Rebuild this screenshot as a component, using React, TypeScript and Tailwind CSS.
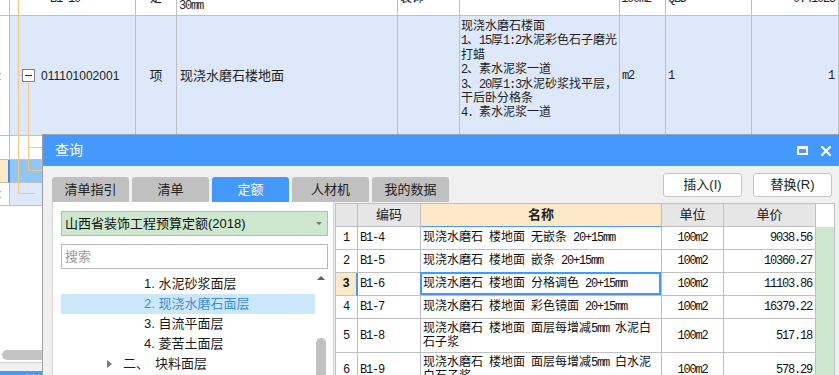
import React from 'react';

const SANS = "font-['Liberation_Sans','Noto_Sans_CJK_SC',sans-serif]";
const MONO = "font-['Liberation_Mono','Noto_Sans_CJK_SC',monospace]";

// SimSun-like: half-width latin, full-width CJK
const Mixed = ({ text }: { text: string }) => {
  const parts = text.split(/([\x20-\x7e]+)/).filter(Boolean);
  return (
    <>
      {parts.map((p, i) =>
        /^[\x20-\x7e]+$/.test(p) ? (
          <span key={i} className="tracking-[-1.2px]">{p}</span>
        ) : (
          <span key={i}>{p}</span>
        )
      )}
    </>
  );
};

const cell = 'shrink-0 border-r border-b border-[#c0c0c0] h-full';

const descLines = [
  '现浇水磨石楼面',
  '1、15厚1:2水泥彩色石子磨光',
  '打蜡',
  '2、素水泥浆一道',
  '3、20厚1:3水泥砂浆找平层，',
  '干后卧分格条',
  '4. 素水泥浆一道',
];

const tabs = ['清单指引', '清单', '定额', '人材机', '我的数据'];

const treeItems = ['1. 水泥砂浆面层', '2. 现浇水磨石面层', '3. 自流平面层', '4. 菱苦土面层'];

const rows = [
  { no: '1', code: 'B1-4', name: ['现浇水磨石 楼地面 无嵌条 20+15mm'], unit: '100m2', price: '9038.56' },
  { no: '2', code: 'B1-5', name: ['现浇水磨石 楼地面 嵌条 20+15mm'], unit: '100m2', price: '10360.27' },
  { no: '3', code: 'B1-6', name: ['现浇水磨石 楼地面 分格调色 20+15mm'], unit: '100m2', price: '11103.86', sel: true },
  { no: '4', code: 'B1-7', name: ['现浇水磨石 楼地面 彩色镜面 20+15mm'], unit: '100m2', price: '16379.22' },
  { no: '5', code: 'B1-8', name: ['现浇水磨石 楼地面 面层每增减5mm 水泥白', '石子浆'], unit: '100m2', price: '517.18', tall: true },
  { no: '6', code: 'B1-9', name: ['现浇水磨石 楼地面 面层每增减5mm 白水泥', '白石子浆'], unit: '100m2', price: '578.29', tall: true },
];

const BackgroundTable = () => (
  <div className="flex flex-col">
    {/* partially scrolled-off row */}
    <div className={`flex h-[34px] -mt-[18px] bg-white text-[12px] text-[#222] ${MONO}`}>
      <div className={`${cell} w-[10px]`} />
      <div className={`${cell} w-[126px] flex items-center pl-[40px]`}><Mixed text="B1-10" /></div>
      <div className={`${cell} w-[41px] flex items-center justify-center`}>定</div>
      <div className={`${cell} w-[221px] flex flex-col justify-center pl-[2px] leading-[14px] whitespace-pre`}>
        <div><Mixed text="现浇水磨石 楼地面 面层每增减5mm 嵌条" /></div>
        <div><Mixed text="30mm" /></div>
      </div>
      <div className={`${cell} w-[62px] flex items-center pl-[2px]`}>装饰</div>
      <div className={`${cell} w-[160px]`} />
      <div className={`${cell} w-[46px] flex items-center pl-[1px]`}><Mixed text="100m2" /></div>
      <div className={`${cell} w-[86px] flex items-center pl-[2px]`}><Mixed text="QBD" /></div>
      <div className={`${cell} flex-1 flex items-center justify-end pr-[3px]`}><Mixed text="0.41025" /></div>
    </div>

    {/* current bill item */}
    <div className="flex h-[120px] bg-[#dde9fb] text-[12px] text-[#222]">
      <div className={`${cell} w-[10px] bg-white flex items-center ${SANS} overflow-hidden`}>
        <span className="-ml-[2px]">:</span>
      </div>
      <div className={`${cell} w-[126px] flex items-center pl-[12px] gap-[6px] ${SANS}`}>
        <div className="w-[13px] h-[13px] border border-[#808080] bg-white flex items-center justify-center">
          <div className="w-[7px] h-px bg-[#333]" />
        </div>
        <span className="text-[12px]">011101002001</span>
      </div>
      <div className={`${cell} w-[41px] flex items-center justify-center ${SANS} text-[13px]`}>项</div>
      <div className={`${cell} w-[221px] flex items-center pl-[3px] ${SANS} text-[13px]`}>现浇水磨石楼地面</div>
      <div className={`${cell} w-[62px]`} />
      <div className={`${cell} w-[160px] pt-[4px] pl-[1px] leading-[14.4px] whitespace-pre ${MONO}`}>
        {descLines.map((l) => (
          <div key={l}><Mixed text={l} /></div>
        ))}
      </div>
      <div className={`${cell} w-[46px] flex items-center pl-[2px] ${MONO}`}><Mixed text="m2" /></div>
      <div className={`${cell} w-[86px] flex items-center pl-[2px] ${MONO}`}><Mixed text="1" /></div>
      <div className={`${cell} flex-1 flex items-center justify-end pr-[4px] ${MONO}`}><Mixed text="1" /></div>
    </div>

    <div className="flex h-[24px] bg-white">
      <div className={`${cell} w-[10px]`} />
      <div className={`${cell} flex-1`} />
    </div>
    <div className="flex h-[23px] bg-[#90c7f7]">
      <div className={`${cell} w-[10px] bg-[#fde8c8] border-r-[2px] border-r-[#3d8ef0]`} />
      <div className={`${cell} flex-1`} />
    </div>
    <div className={`flex h-[23px] bg-[#dde9fb] text-[12px] ${SANS}`}>
      <div className={`${cell} w-[10px] bg-white flex items-center overflow-hidden`}>
        <span className="-ml-[2px]">:</span>
      </div>
      <div className={`${cell} flex-1`} />
    </div>

    <div className="h-[142px] bg-white" />
    <div className="h-[14px] bg-white flex items-center pl-[2px]">
      <div className="w-[60px] h-[10px] rounded-full bg-[#c4c4c4]" />
    </div>
    <div className="h-px bg-[#cfcfcf]" />
    <div className="h-[8px] bg-[#f0f0f0]" />
    <div className={`h-[20px] bg-[#4499ff] pl-[12px] text-[12px] text-white leading-[16px] pt-[2px] ${SANS}`}>工料机显示</div>
  </div>
);

const TreeLines = () => (
  <svg className="absolute left-0 top-0" width="60" height="210" viewBox="0 0 60 210">
    <g stroke="#f8c67a" strokeWidth="1" fill="none">
      <path d="M18.5 0 V193.5 H35" />
      <path d="M18.5 75.5 H22" />
      <path d="M28.5 83 V170.5 H43" />
      <path d="M28.5 147.5 H43" />
    </g>
  </svg>
);

const QueryDialog = () => (
  <div className={`absolute left-[42px] top-[134px] w-[801px] h-[260px] border border-[#a0a0a0] bg-[#f0f0f0] flex flex-col ${SANS}`}>
    {/* title bar */}
    <div className="h-[31px] shrink-0 bg-[#4499ff] flex items-center justify-between pl-[12px] pr-[11px]">
      <span className="text-[14px] text-white">查询</span>
      <div className="flex items-center gap-[13px]">
        <div className="w-[11px] h-[9px] border-2 border-t-[3px] border-white" />
        <svg width="10" height="10" viewBox="0 0 10 10">
          <path d="M1 1 L9 9 M9 1 L1 9" stroke="white" strokeWidth="2.2" strokeLinecap="square" />
        </svg>
      </div>
    </div>

    {/* tabs + actions */}
    <div className="mt-[7px] flex items-end justify-between pl-[9px] pr-[10px]">
      <div className="flex gap-[3px]">
        {tabs.map((t) => (
          <div
            key={t}
            className={`w-[77px] h-[25px] rounded-t-[3px] flex items-center justify-center text-[13px] ${
              t === '定额' ? 'bg-[#4499ff] text-white' : 'bg-[#c0c0c0] text-[#222]'
            }`}
          >
            {t}
          </div>
        ))}
      </div>
      <div className="flex gap-[11px] mb-[5px]">
        <button className="w-[79px] h-[24px] bg-white border border-[#c6c6c6] rounded-[3px] text-[13px] text-[#222]">插入(I)</button>
        <button className="w-[79px] h-[24px] bg-white border border-[#c6c6c6] rounded-[3px] text-[13px] text-[#222]">替换(R)</button>
      </div>
    </div>

    {/* content */}
    <div className="flex flex-1 pl-[9px] min-h-0">
      {/* quota tree */}
      <div className="w-[282px] h-full bg-white border-x border-[#d4d4d4] pt-[9px] pl-[8px] flex flex-col">
        <div className="w-[267px] h-[25px] shrink-0 bg-[#cde8cf] border border-[#b8b8b8] flex items-center justify-between pl-[3px] pr-[5px]">
          <span className="text-[13px] text-[#111]">山西省装饰工程预算定额(2018)</span>
          <div className="w-0 h-0 border-x-[3px] border-x-transparent border-t-[3px] border-t-[#777]" />
        </div>
        <div className="w-[267px] h-[25px] shrink-0 mt-[8px] bg-white border border-[#b8b8b8] flex items-center pl-[3px]">
          <span className="text-[13px] text-[#9a9a9a]">搜索</span>
        </div>
        <div className="flex mt-[4px] flex-1 min-h-0">
          <div className="w-[254px] pt-[1px]">
            {treeItems.map((t, i) => (
              <div
                key={t}
                className={`h-[20px] flex items-center pl-[83px] text-[13px] ${
                  i === 1 ? 'bg-[#cce6fa] text-[#3a8ee6]' : 'text-[#1a1a1a]'
                }`}
              >
                {t}
              </div>
            ))}
            <div className="h-[20px] flex items-center pl-[46px] text-[13px] text-[#1a1a1a]">
              <div className="w-0 h-0 border-y-[4px] border-y-transparent border-l-[5px] border-l-[#7a7a7a]" />
              <span className="ml-[11px]">二、</span>
              <span className="ml-[6px]">块料面层</span>
            </div>
          </div>
          <div className="w-[12px] flex flex-col items-center pt-[3px]">
            <div className="w-0 h-0 border-x-[4px] border-x-transparent border-b-[4px] border-b-[#606060]" />
            <div className="mt-[58px] w-[10px] h-[60px] rounded-full bg-[#c1c1c1]" />
          </div>
        </div>
      </div>

      {/* quota grid */}
      <div className="ml-[1px] mt-[1px] w-[500px] h-full border border-[#c0c0c0] bg-white flex flex-col">
        <div className="flex h-[23px] shrink-0 text-[13px] text-[#222]">
          <div className={`${cell} w-[22px] bg-[#e6e6e6]`} />
          <div className={`${cell} w-[63px] bg-[#e6e6e6] flex items-center justify-center`}>编码</div>
          <div className={`${cell} w-[241px] bg-[#fde8c8] border-b-[#4499ff] flex items-center justify-center font-bold`}>名称</div>
          <div className={`${cell} w-[62px] bg-[#e6e6e6] flex items-center justify-center`}>单位</div>
          <div className={`${cell} w-[92px] bg-[#e6e6e6] flex items-center justify-center`}>单价</div>
          <div className="flex-1 bg-white" />
        </div>
        {rows.map((r) => (
          <div key={r.no} className={`flex shrink-0 text-[12px] text-[#111] ${MONO} ${r.tall ? 'h-[34px]' : 'h-[23px]'}`}>
            <div
              className={`${cell} w-[22px] flex items-center justify-center ${
                r.sel ? 'bg-[#fde8c8] font-bold border-r-2 border-r-[#4499ff]' : ''
              }`}
            >
              {r.no}
            </div>
            <div className={`${cell} w-[63px] flex items-center pl-[2px] whitespace-pre`}><Mixed text={r.code} /></div>
            <div className={`${cell} w-[241px] relative flex flex-col justify-center pl-[2px] leading-[14px] whitespace-pre`}>
              {r.name.map((n) => (
                <div key={n}><Mixed text={n} /></div>
              ))}
              {r.sel && <div className="absolute -top-px -left-px right-0 bottom-0 border-2 border-[#4499ff]" />}
            </div>
            <div className={`${cell} w-[62px] flex items-center justify-center`}><Mixed text={r.unit} /></div>
            <div className={`${cell} w-[92px] flex items-center justify-end pr-[3px]`}><Mixed text={r.price} /></div>
            <div className="flex-1 bg-[#cde8cf]" />
          </div>
        ))}
      </div>
    </div>
  </div>
);

export default function App() {
  return (
    <div className={`relative w-[839px] h-[375px] overflow-hidden bg-white ${SANS}`}>
      <BackgroundTable />
      <TreeLines />
      <QueryDialog />
    </div>
  );
}
